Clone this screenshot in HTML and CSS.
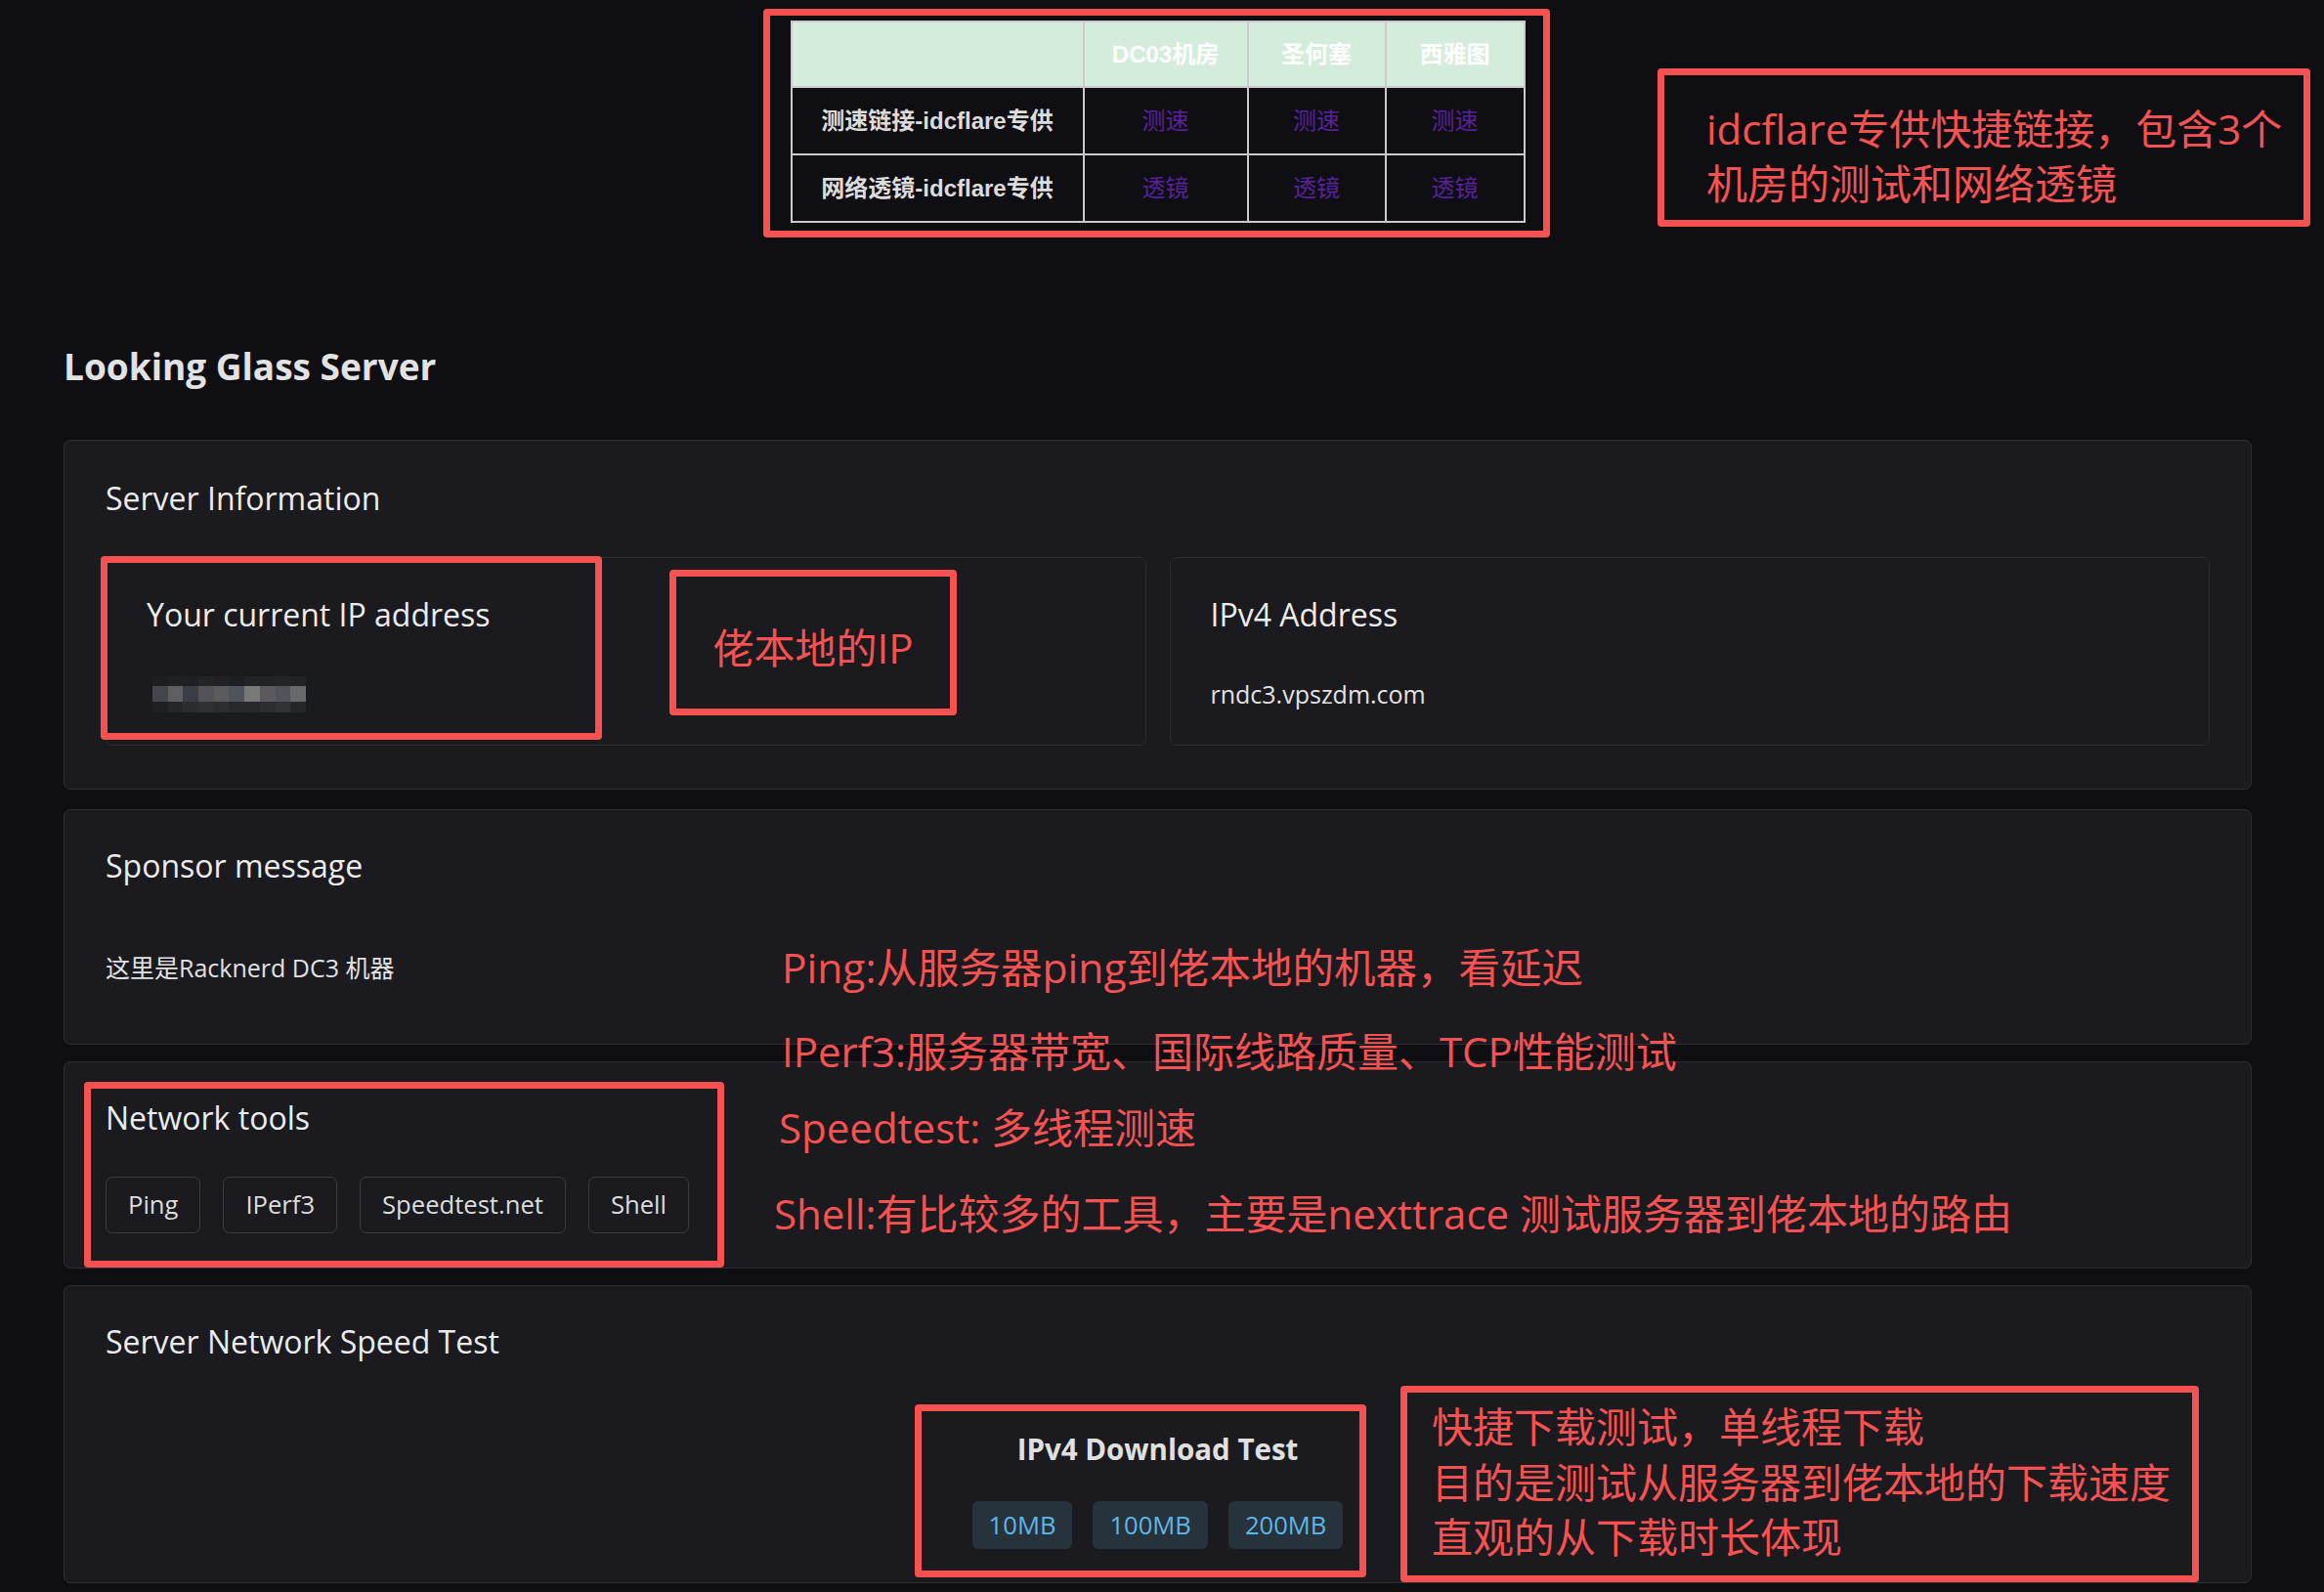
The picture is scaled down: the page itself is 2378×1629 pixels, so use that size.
FILE: index.html
```html
<!DOCTYPE html>
<html lang="zh-CN">
<head>
<meta charset="utf-8">
<title>Looking Glass Server</title>
<link rel="stylesheet" href="styles.css">
</head>
<body>
<div class="page">
  <div class="container">
    <table class="quick-links">
      <colgroup>
        <col class="c-label"><col class="c-dc"><col class="c-sj"><col class="c-sea">
      </colgroup>
      <thead>
        <tr><th></th><th>DC03机房</th><th>圣何塞</th><th>西雅图</th></tr>
      </thead>
      <tbody>
        <tr><th>测速链接-idcflare专供</th><td><a href="#">测速</a></td><td><a href="#">测速</a></td><td><a href="#">测速</a></td></tr>
        <tr><th>网络透镜-idcflare专供</th><td><a href="#">透镜</a></td><td><a href="#">透镜</a></td><td><a href="#">透镜</a></td></tr>
      </tbody>
    </table>

    <h2 class="lg-title">Looking Glass Server</h2>

    <div class="cards">
      <section class="card card-info">
        <h5 class="card-title">Server Information</h5>
        <div class="info-grid">
          <div class="info-box">
            <div class="info-label">Your current IP address</div>
            <div class="info-value"><span class="ip-blur"></span></div>
          </div>
          <div class="info-box">
            <div class="info-label">IPv4 Address</div>
            <div class="info-value">rndc3.vpszdm.com</div>
          </div>
        </div>
      </section>

      <section class="card card-sponsor">
        <h5 class="card-title">Sponsor message</h5>
        <p class="sponsor-text">这里是Racknerd DC3 机器</p>
      </section>

      <section class="card card-tools">
        <h5 class="card-title">Network tools</h5>
        <div class="tool-row">
          <button class="tool-btn">Ping</button>
          <button class="tool-btn">IPerf3</button>
          <button class="tool-btn">Speedtest.net</button>
          <button class="tool-btn">Shell</button>
        </div>
      </section>

      <section class="card card-speed">
        <h5 class="card-title">Server Network Speed Test</h5>
        <div class="dl">
          <div class="dl-title">IPv4 Download Test</div>
          <div class="dl-row">
            <button class="dl-btn">10MB</button>
            <button class="dl-btn">100MB</button>
            <button class="dl-btn">200MB</button>
          </div>
        </div>
      </section>
    </div>
  </div>

  <div class="annotations">
    <div class="ann ann-table"></div>
    <div class="ann ann-top ann-text">idcflare专供快捷链接，包含3个<br>机房的测试和网络透镜</div>
    <div class="ann ann-ipbox"></div>
    <div class="ann ann-ipnote ann-text">佬本地的IP</div>
    <div class="ann-line ann-text line-ping">Ping:从服务器ping到佬本地的机器，看延迟</div>
    <div class="ann-line ann-text line-iperf">IPerf3:服务器带宽、国际线路质量、TCP性能测试</div>
    <div class="ann-line ann-text line-speed">Speedtest: 多线程测速</div>
    <div class="ann-line ann-text line-shell">Shell:有比较多的工具，主要是nexttrace 测试服务器到佬本地的路由</div>
    <div class="ann ann-tools"></div>
    <div class="ann ann-dl"></div>
    <div class="ann ann-dlnote ann-text">快捷下载测试，单线程下载<br>目的是测试从服务器到佬本地的下载速度<br>直观的从下载时长体现</div>
  </div>
</div>
</body>
</html>
```

FILE: styles.css
```css
html, body {
  margin: 0;
  padding: 0;
  background: #0f0f13;
}

body {
  font-family: "Open Sans", "Noto Sans CJK SC", sans-serif;
  font-size: 25.6px;
  line-height: 38px;
  color: #dee2e6;
}

.page {
  position: relative;
  width: 2378px;
  height: 1629px;
  overflow: hidden;
}

.container {
  padding: 21px 74px 0 65px;
}

/* quick links table */
.quick-links {
  width: 750px;
  margin: 0 auto 124px;
  border-collapse: collapse;
  table-layout: fixed;
  font-family: "Liberation Sans", "Noto Sans CJK SC", sans-serif;
  font-size: 24px;
}
.c-label { width: 299px; }
.c-dc { width: 168px; }
.c-sj { width: 141px; }
.c-sea { width: 142px; }

.quick-links th,
.quick-links td {
  border: 2px solid #cbcbcb;
  padding: 0;
  text-align: center;
  vertical-align: middle;
}
.quick-links thead tr { height: 67px; }
.quick-links tbody tr { height: 69px; }
.quick-links thead th {
  background: #d4edda;
  color: #ffffff;
  font-weight: 700;
}
.quick-links tbody th {
  color: #dcdcdc;
  font-weight: 700;
}
.quick-links a {
  color: #57219a;
  text-decoration: none;
}

.lg-title {
  margin: 0 0 52px;
  font-size: 37px;
  line-height: 46px;
  font-weight: 700;
  color: #e2e2e2;
}

/* cards */
.cards {
  display: flex;
  flex-direction: column;
  gap: 17px;
}

.card {
  background: #1a1a1f;
  border: 1px solid #2e2e34;
  border-radius: 7px;
  padding: 38px 42px 35px;
}

.card-title {
  margin: 0;
  font-size: 32px;
  line-height: 38px;
  font-weight: 400;
  color: #ececec;
}

.card-info {
  padding-top: 40px;
  padding-bottom: 44px;
  margin-bottom: 3px;
}

.info-grid {
  display: grid;
  grid-template-columns: 1fr 1fr;
  gap: 24px;
  margin-top: 41px;
}

.info-box {
  border: 1px solid #2c2c32;
  border-radius: 7px;
  padding: 39px 41px 33px;
}

.info-label {
  font-size: 32px;
  line-height: 38px;
  color: #ececec;
}

.info-value {
  margin-top: 43px;
  height: 38px;
  font-size: 25px;
  line-height: 38px;
  color: #e2e2e2;
}

.ip-blur {
  display: inline-block;
  vertical-align: top;
  width: 157px;
  height: 37px;
  margin: 1px 0 0 6px;
  background-repeat: no-repeat;
  background-size: 100% 10px, 100% 16px, 100% 11px;
  background-position: 0 0, 0 10px, 0 26px;
  background-image:
    linear-gradient(to right, #1d1e22 0 10%, #202125 10% 20%, #1f2024 20% 30%, #242428 30% 40%, #222226 40% 50%, #1e1f23 50% 60%, #232428 60% 70%, #222327 70% 80%, #242529 80% 90%, #222327 90% 100%),
    linear-gradient(to right, #44454d 0 10%, #5f5f63 10% 20%, #3a3d46 20% 30%, #525258 30% 40%, #5b5a5d 40% 50%, #4f535b 50% 60%, #797a77 60% 70%, #5b595d 70% 80%, #51535a 80% 90%, #686a69 90% 100%),
    linear-gradient(to right, #1f2024 0 10%, #25262a 10% 20%, #2b2c30 20% 30%, #303135 30% 40%, #2c2d31 40% 50%, #28292d 50% 60%, #27282c 60% 70%, #2c2d31 70% 80%, #313236 80% 90%, #25272b 90% 100%);
}

.card-sponsor {
  padding-bottom: 59px;
}

.sponsor-text {
  margin: 66px 0 0;
  font-size: 25px;
  color: #e2e2e2;
}

.tool-row {
  display: flex;
  gap: 23px;
  margin-top: 41px;
}

.tool-btn {
  font: inherit;
  line-height: 38px;
  padding: 9px 22px;
  background: transparent;
  color: #dcdcdc;
  border: 1px solid #3c3c43;
  border-radius: 7px;
}

.card-speed {
  padding-bottom: 34px;
}

.dl {
  margin-top: 72px;
  text-align: center;
}

.dl-title {
  font-size: 29.5px;
  line-height: 38px;
  font-weight: 700;
  color: #e0e0e0;
}

.dl-row {
  display: flex;
  justify-content: center;
  gap: 21px;
  margin-top: 34px;
}

.dl-btn {
  font: inherit;
  height: 49px;
  line-height: 49px;
  padding: 0 17px;
  border: 0;
  border-radius: 6px;
  background: #26323c;
  color: #5fb7e6;
}

/* annotation overlay */
.annotations {
  position: absolute;
  inset: 0;
  pointer-events: none;
}

.ann {
  position: absolute;
  box-sizing: border-box;
  border: 7px solid #f65252;
  border-radius: 4px;
}

.ann-text {
  color: #f65252;
  font-family: "Open Sans", "Noto Sans CJK SC", sans-serif;
  font-size: 42px;
  line-height: 56px;
  white-space: nowrap;
}

.ann-table { left: 781px; top: 9px; width: 805px; height: 234px; }
.ann-top { left: 1696px; top: 70px; width: 668px; height: 162px; padding: 27px 0 0 43px; }
.ann-ipbox { left: 103px; top: 569px; width: 513px; height: 188px; }
.ann-ipnote { left: 685px; top: 583px; width: 294px; height: 149px; padding-top: 45px; text-align: center; }
.ann-tools { left: 86px; top: 1107px; width: 655px; height: 190px; }
.ann-dl { left: 936px; top: 1437px; width: 462px; height: 177px; }
.ann-dlnote { left: 1433px; top: 1418px; width: 817px; height: 201px; padding: 7px 0 0 25px; line-height: 56.5px; }

.ann-line { position: absolute; }
.line-ping { left: 800px; top: 962px; font-size: 42.5px; }
.line-iperf { left: 800px; top: 1048px; }
.line-speed { left: 797px; top: 1126px; }
.line-shell { left: 792px; top: 1214px; }
```
